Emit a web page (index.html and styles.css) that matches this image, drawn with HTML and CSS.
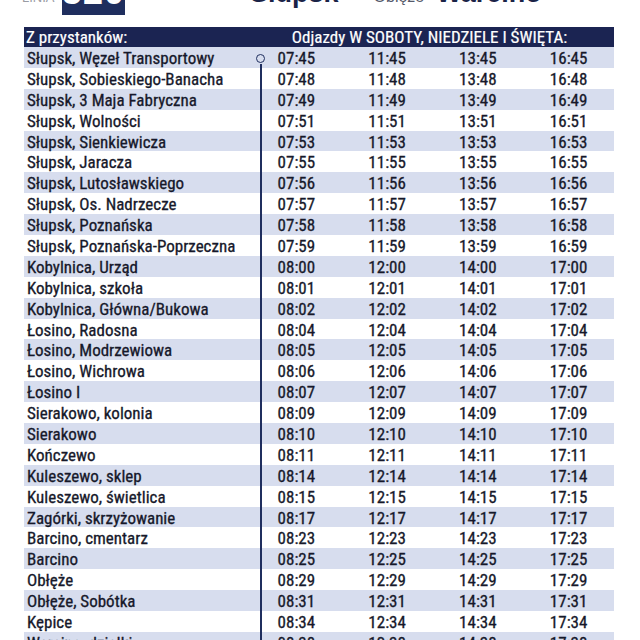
FILE: index.html
```html
<!DOCTYPE html>
<html lang="pl">
<head>
<meta charset="utf-8">
<link rel="stylesheet" href="styles.css">
</head>
<body>
<header class="top">
  <span class="linia">LINIA</span>
  <span class="num">520</span>
  <span class="city">Słupsk</span>
  <span class="via">Obłęże</span>
  <span class="city">Warcino</span>
</header>
<section class="table">
  <div class="route"><span class="dot"></span><span class="line"></span></div>
  <div class="head">
    <span class="hname">Z przystanków:</span>
    <span class="htimes">Odjazdy W SOBOTY, NIEDZIELE I ŚWIĘTA:</span>
  </div>
  <div class="row"><span class="name">Słupsk, Węzeł Transportowy</span><span>07:45</span><span>11:45</span><span>13:45</span><span>16:45</span></div>
  <div class="row"><span class="name">Słupsk, Sobieskiego-Banacha</span><span>07:48</span><span>11:48</span><span>13:48</span><span>16:48</span></div>
  <div class="row"><span class="name">Słupsk, 3 Maja Fabryczna</span><span>07:49</span><span>11:49</span><span>13:49</span><span>16:49</span></div>
  <div class="row"><span class="name">Słupsk, Wolności</span><span>07:51</span><span>11:51</span><span>13:51</span><span>16:51</span></div>
  <div class="row"><span class="name">Słupsk, Sienkiewicza</span><span>07:53</span><span>11:53</span><span>13:53</span><span>16:53</span></div>
  <div class="row"><span class="name">Słupsk, Jaracza</span><span>07:55</span><span>11:55</span><span>13:55</span><span>16:55</span></div>
  <div class="row"><span class="name">Słupsk, Lutosławskiego</span><span>07:56</span><span>11:56</span><span>13:56</span><span>16:56</span></div>
  <div class="row"><span class="name">Słupsk, Os. Nadrzecze</span><span>07:57</span><span>11:57</span><span>13:57</span><span>16:57</span></div>
  <div class="row"><span class="name">Słupsk, Poznańska</span><span>07:58</span><span>11:58</span><span>13:58</span><span>16:58</span></div>
  <div class="row"><span class="name">Słupsk, Poznańska-Poprzeczna</span><span>07:59</span><span>11:59</span><span>13:59</span><span>16:59</span></div>
  <div class="row"><span class="name">Kobylnica, Urząd</span><span>08:00</span><span>12:00</span><span>14:00</span><span>17:00</span></div>
  <div class="row"><span class="name">Kobylnica, szkoła</span><span>08:01</span><span>12:01</span><span>14:01</span><span>17:01</span></div>
  <div class="row"><span class="name">Kobylnica, Główna/Bukowa</span><span>08:02</span><span>12:02</span><span>14:02</span><span>17:02</span></div>
  <div class="row"><span class="name">Łosino, Radosna</span><span>08:04</span><span>12:04</span><span>14:04</span><span>17:04</span></div>
  <div class="row"><span class="name">Łosino, Modrzewiowa</span><span>08:05</span><span>12:05</span><span>14:05</span><span>17:05</span></div>
  <div class="row"><span class="name">Łosino, Wichrowa</span><span>08:06</span><span>12:06</span><span>14:06</span><span>17:06</span></div>
  <div class="row"><span class="name">Łosino I</span><span>08:07</span><span>12:07</span><span>14:07</span><span>17:07</span></div>
  <div class="row"><span class="name">Sierakowo, kolonia</span><span>08:09</span><span>12:09</span><span>14:09</span><span>17:09</span></div>
  <div class="row"><span class="name">Sierakowo</span><span>08:10</span><span>12:10</span><span>14:10</span><span>17:10</span></div>
  <div class="row"><span class="name">Kończewo</span><span>08:11</span><span>12:11</span><span>14:11</span><span>17:11</span></div>
  <div class="row"><span class="name">Kuleszewo, sklep</span><span>08:14</span><span>12:14</span><span>14:14</span><span>17:14</span></div>
  <div class="row"><span class="name">Kuleszewo, świetlica</span><span>08:15</span><span>12:15</span><span>14:15</span><span>17:15</span></div>
  <div class="row"><span class="name">Zagórki, skrzyżowanie</span><span>08:17</span><span>12:17</span><span>14:17</span><span>17:17</span></div>
  <div class="row"><span class="name">Barcino, cmentarz</span><span>08:23</span><span>12:23</span><span>14:23</span><span>17:23</span></div>
  <div class="row"><span class="name">Barcino</span><span>08:25</span><span>12:25</span><span>14:25</span><span>17:25</span></div>
  <div class="row"><span class="name">Obłęże</span><span>08:29</span><span>12:29</span><span>14:29</span><span>17:29</span></div>
  <div class="row"><span class="name">Obłęże, Sobótka</span><span>08:31</span><span>12:31</span><span>14:31</span><span>17:31</span></div>
  <div class="row"><span class="name">Kępice</span><span>08:34</span><span>12:34</span><span>14:34</span><span>17:34</span></div>
  <div class="row"><span class="name">Warcino, działki</span><span>08:38</span><span>12:38</span><span>14:38</span><span>17:38</span></div>
</section>
</body>
</html>
```

FILE: styles.css
```css
html, body {
  margin: 0;
  padding: 0;
  background: #ffffff;
  overflow: hidden;
}
body {
  font-family: "Roboto Condensed", "Liberation Sans Narrow", "DejaVu Sans Condensed", "Liberation Sans", sans-serif;
  font-stretch: condensed;
  color: #1b1e30;
}
.top {
  display: flex;
  align-items: flex-end;
  height: 40px;
  margin-top: -25px;
  padding-left: 22px;
}
.linia {
  font-family: "Liberation Sans", sans-serif;
  color: #9a9ca4;
  font-size: 13px;
  width: 40px;
  margin-bottom: 10px;
}
.num {
  font-family: "Liberation Sans", sans-serif;
  background: #1f2e5e;
  color: #ffffff;
  font-weight: bold;
  font-size: 36px;
  width: 63px;
  height: 40px;
  line-height: 34px;
  text-align: center;
  letter-spacing: 1px;
}
.city {
  font-family: "Liberation Sans", sans-serif;
  font-weight: bold;
  font-size: 27px;
  color: #1a2347;
  margin-bottom: 6px;
}
.top .city:nth-of-type(3) { margin-left: 125px; }
.via {
  font-family: "Liberation Sans", sans-serif;
  color: #55596a;
  font-size: 16px;
  margin: 0 12px 9px 35px;
}
.table {
  position: relative;
  margin: 12px 26px 0 24px;
}
.head {
  display: grid;
  grid-template-columns: 227px 1fr;
  height: 20px;
  align-items: center;
  background: #1b2452;
  color: #ffffff;
  font-size: 17px;
  -webkit-text-stroke: 0.2px #ffffff;
}
.hname { padding-left: 2px; }
.htimes { text-align: center; padding-right: 6px; }
.row {
  display: grid;
  grid-template-columns: 227px repeat(4, 1fr);
  height: 20.9px;
  align-items: center;
  font-size: 17px;
  padding-top: 1px;
  box-sizing: border-box;
  color: #16182a;
  -webkit-text-stroke: 0.3px #16182a;
}
.row:nth-of-type(odd) { background: #d7ddee; }
.row span { text-align: center; }
.row .name { text-align: left; padding-left: 3px; white-space: nowrap; }
.route {
  position: absolute;
  left: 232px;
  top: 27px;
  bottom: -200px;
  width: 10px;
  z-index: 2;
}
.dot {
  position: absolute;
  left: 0;
  top: 0;
  width: 7px;
  height: 7px;
  border: 1.5px solid #1f2e5e;
  border-radius: 50%;
}
.line {
  position: absolute;
  left: 4.25px;
  top: 10px;
  bottom: 0;
  width: 1.5px;
  background: #1f2e5e;
}
```
